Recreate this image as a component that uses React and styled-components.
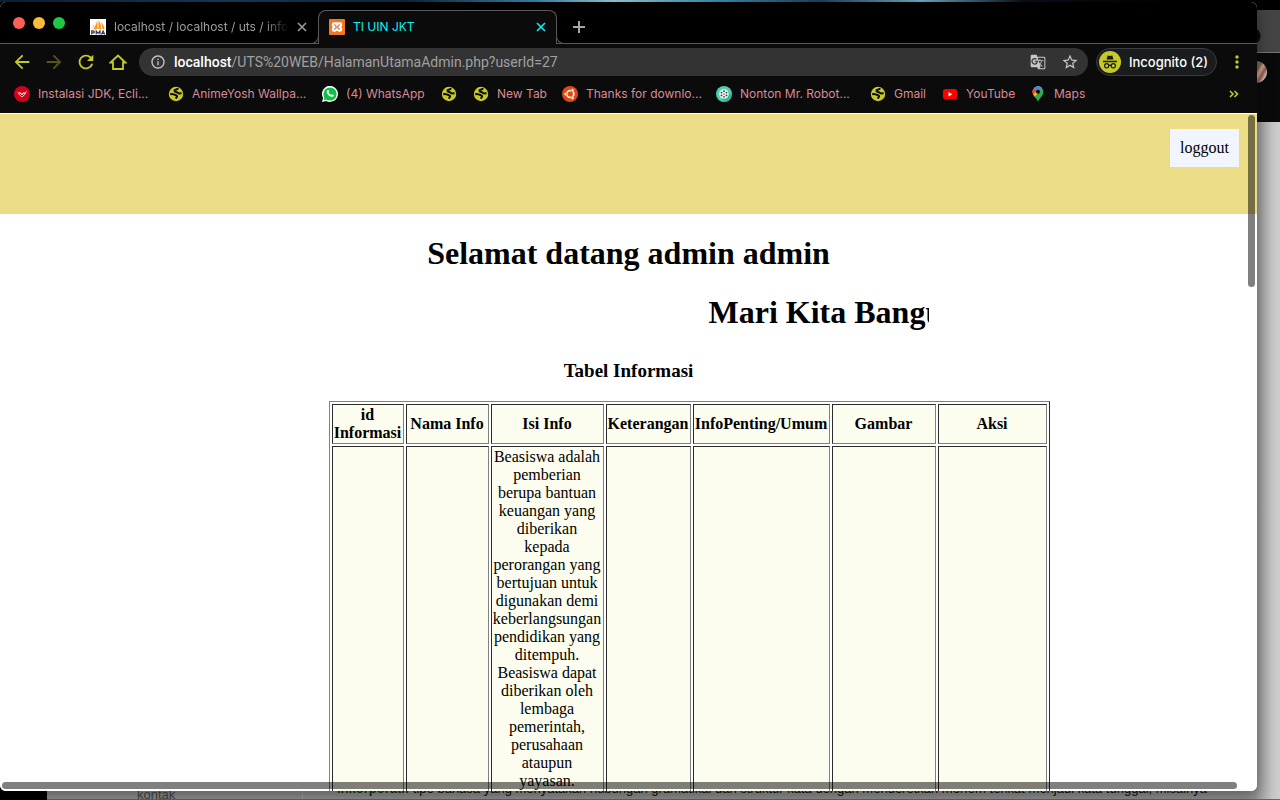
import React from "react";
import styled, { createGlobalStyle } from "styled-components";
import { MdGTranslate, MdStarBorder, MdInfoOutline, MdMoreVert, MdArrowBack, MdArrowForward, MdRefresh } from "react-icons/md";

const lime = "#c6ca29";
const line = "#59595b";
const bar = "#0b0b0b";

const Global = createGlobalStyle`
  *, *::before, *::after { box-sizing: border-box; }
  html, body { margin: 0; height: 100%; overflow: hidden; }
  #root { height: 100%; }
  button { font: inherit; color: inherit; background: none; border: 0; padding: 0; }
  a { color: inherit; text-decoration: none; }
  svg { display: block; flex: none; }
`;

const Desktop = styled.div`
  position: relative;
  height: 100vh;
  padding: 2px 23px 9px 0;
  overflow: hidden;
  background: linear-gradient(90deg, #0d2238 0%, #1b3c5c 18%, #0e2a44 32%, #3c8db0 42%, #9ad3e2 48%, #3a93b4 56%, #1a4560 64%, #6fb3ca 72%, #07101a 80%, #000 92%) top / 100% 2px no-repeat #000;
`;

const BackWindow = styled.div`
  position: absolute;
  inset: 2px 0 0 47px;
  display: flex;
  flex-direction: column;
  background: #000;
`;
const BackTabs = styled.div`
  height: 51px;
  border-top: 8px solid #000;
  border-bottom: 1px solid #777;
  background: radial-gradient(circle at calc(100% - 28px) 26px, #0a0a0a 8px, transparent 9px) #444;
`;
const BackBar = styled.div`
  display: flex;
  justify-content: flex-end;
  height: 69px;
  padding: 8px 13px;
  background: #0a0a0a;
`;
const Avatar = styled.span`
  width: 22px;
  height: 22px;
  border-radius: 50%;
  background: linear-gradient(120deg, #765 50%, #d9a58f 60%, #8c5a50 72%, #cfc8bb 84%, #555 95%);
`;
const BackPage = styled.div`
  flex: 1;
  display: flex;
  align-items: flex-end;
  border-bottom: 1px solid #666;
  background: linear-gradient(90deg, #919191 calc(100% - 32px), #969696 calc(100% - 24px), #c4c4c4 calc(100% - 8px), #cecece);
  font: 13px/14px "Liberation Sans", Arial, sans-serif;
  color: #444;
`;
const BackSide = styled.div`
  width: 256px;
  height: 11px;
  padding-left: 90px;
  border-right: 1px solid #a5a5a5;
  white-space: nowrap;
`;
const BackText = styled.p`
  margin: 0 0 0 34px;
  height: 17px;
  white-space: nowrap;
  color: #0a0a0a;
  b { color: #0a3a12; }
`;

const Window = styled.div`
  position: relative;
  height: 100%;
  display: flex;
  flex-direction: column;
  overflow: hidden;
  border-radius: 6px;
  background: #fff;
  box-shadow: 0 4px 16px rgba(0, 0, 0, 0.4);
  font-family: Inter, "Liberation Sans", sans-serif;
`;

const TabStrip = styled.div`
  display: flex;
  align-items: flex-end;
  flex: none;
  height: 42px;
  padding-left: 13px;
  border-bottom: 1px solid ${line};
  background: #000;
`;
const Lights = styled.div`
  display: flex;
  align-self: flex-start;
  gap: 8px;
  margin: 15px 15px 0 0;
`;
const Light = styled.button`
  width: 12px;
  height: 12px;
  border-radius: 50%;
  background: ${(p) => p.$color};
`;
const Tab = styled.div`
  position: relative;
  display: flex;
  align-items: center;
  width: ${(p) => (p.$active ? 239 : 238)}px;
  height: 34px;
  margin-bottom: -1px;
  padding: 0 10px 2px;
  padding-left: ${(p) => (p.$active ? 10 : 9)}px;
  gap: 8px;
  border: 1px solid transparent;
  border-bottom: 0;
  border-radius: 8px 8px 0 0;
  font-size: 12px;
  color: #9a9d9f;
  ${(p) => p.$active && `
    background: ${bar};
    border-color: ${line};
    color: #00f5f5;
    &::before, &::after {
      content: "";
      position: absolute;
      bottom: 0;
      width: 9px;
      height: 9px;
      background: #000;
      border-bottom: 1px solid ${line};
    }
    &::before { left: -9px; border-right: 1px solid ${line}; border-bottom-right-radius: 8px; }
    &::after { right: -9px; border-left: 1px solid ${line}; border-bottom-left-radius: 8px; }
  `}
`;
const TabTitle = styled.span`
  flex: 1;
  white-space: nowrap;
  ${(p) => p.$fade && "mask-image: linear-gradient(90deg, #000 calc(100% - 24px), transparent);"}
`;
const NewTab = styled.button`
  align-self: flex-end;
  margin: 0 0 10px 16px;
  color: #a5a8aa;
`;

const Toolbar = styled.div`
  display: flex;
  align-items: center;
  flex: none;
  height: 36px;
  padding: 0 12px 0 11px;
  gap: 10px;
  background: ${bar};
  color: ${lime};
`;
const NavButton = styled.button`
  display: grid;
  place-items: center;
  width: 22px;
  height: 22px;
  &:disabled { color: #55571a; }
`;
const Omnibox = styled.div`
  flex: 1;
  display: flex;
  align-items: center;
  gap: 8px;
  height: 28px;
  margin-right: -2px;
  padding: 0 9px 0 11px;
  border-radius: 14px;
  background: #333;
  color: #c8c8c8;
`;
const Address = styled.a`
  flex: 1;
  font-family: Roboto, "Liberation Sans", sans-serif;
  font-size: 14px;
  color: #a0a0a0;
  b { color: #fff; font-weight: 500; }
`;
const OmniButton = styled.button`
  display: grid;
  place-items: center;
  width: 18px;
  height: 18px;
  margin-left: 6px;
`;
const Incognito = styled.button`
  display: flex;
  align-items: center;
  flex: none;
  gap: 8px;
  width: 121px;
  height: 28px;
  padding: 0 2px;
  border: 1px solid #3a3c3f;
  border-radius: 14px;
  background: #1b1c1e;
  font-size: 13px;
  font-weight: 500;
  color: #fff;
  white-space: nowrap;
`;
const MenuButton = styled.button`
  width: 18px;
`;

const Bookmarks = styled.nav`
  display: flex;
  flex: none;
  gap: 16px;
  height: 33px;
  padding: 6px 18px 0 14px;
  background: ${bar};
  font-size: 12px;
  line-height: 16px;
  color: #d98a96;
  white-space: nowrap;
`;
const Bookmark = styled.a`
  display: flex;
  gap: 8px;
  height: 16px;
`;
const BookmarkLabel = styled.span`
  width: ${(p) => p.$width}px;
`;
const More = styled.button`
  height: 16px;
  margin-left: auto;
  color: ${lime};
`;

const Viewport = styled.div`
  position: relative;
  flex: 1;
  min-height: 0;
  overflow: hidden;
  border-top: 1px solid #fff;
  background: #fff;
  font: 16px/18px "Liberation Serif", "Times New Roman", serif;
  color: #000;
`;
const Banner = styled.header`
  display: flex;
  justify-content: flex-end;
  align-items: flex-start;
  height: 100px;
  padding: 15px 18px;
  background: #ebdd85;
`;
const Logout = styled.a`
  padding: 10px;
  background: #f0f5ff;
`;
const Content = styled.main`
  width: 600px;
  margin: 0 auto;
`;
const Welcome = styled.h1`
  margin: 21px 0 22px;
  font-size: 32px;
  line-height: 37px;
  text-align: center;
`;
const Marquee = styled.div`
  overflow: hidden;
  padding-left: 380px;
  font-size: 32px;
  font-weight: bold;
  line-height: 37px;
  white-space: nowrap;
`;
const TableTitle = styled.h3`
  margin: 29px 0 20px;
  font-size: 19px;
  line-height: 21px;
  text-align: center;
`;
const InfoTable = styled.table`
  table-layout: fixed;
  width: 721px;
  border: 1px solid;
  border-color: #808080 #2c2c2c #2c2c2c #808080;
  border-spacing: 2px;
  text-align: center;
  th, td {
    padding: 1px;
    border: 1px solid;
    border-color: #2c2c2c #808080 #808080 #2c2c2c;
    background: #fcfdee;
  }
  td { height: 460px; vertical-align: top; white-space: pre-line; }
`;
const Col = styled.col`
  width: ${(p) => p.$width}px;
`;
const ScrollThumb = styled.div`
  position: absolute;
  border-radius: 4px;
  background: rgba(0, 0, 0, 0.5);
  ${(p) => (p.$vertical
    ? "top: 1px; right: 2px; width: 7px; height: 172px;"
    : "left: 2px; right: 20px; bottom: 2px; height: 7px;")}
`;

const Icon = ({ size = 16, box = 16, children }) => (
  <svg width={size} height={size} viewBox={`0 0 ${box} ${box}`} fill="none" aria-hidden="true">{children}</svg>
);
const Globe = () => (
  <Icon>
    <circle cx="8" cy="8" r="7.2" fill={lime} />
    <path d="M10.500 2.800C9 2.600 8.600 3.500 7.400 3.800 6 4.200 6.200 5.800 7.800 5.900c1.800.1 2 1.300 3.200 1.500l2.600-.2M2.200 8.300c1.400-.3 2.400-.4 3.400.1 1.600.8 3.100.5 3.500 1.700.3 1-.9 1.300-1.300 2.500" stroke="#0b0b0b" strokeWidth="2" />
  </Icon>
);
const Joget = () => (
  <Icon>
    <circle cx="8" cy="8" r="8" fill="#d0021b" />
    <path d="M3.500 6.200 5 7.500l1.500-.8L8 8.200l1.600-1.500 1.200.8 2-2.300M4.300 7.600 8 11l3.800-3.600M5.400 6.400 8 9l2.600-2.600" stroke="#ffdfe2" strokeWidth=".9" />
  </Icon>
);
const Whatsapp = () => (
  <Icon>
    <path d="M0 16 1.100 12A8 8 0 1 1 4.100 14.900Z" fill="#fff" />
    <circle cx="8" cy="8" r="6.600" fill="#0cc143" />
    <path d="M1.700 14.300 2.600 11l2.300 2.400Z" fill="#0cc143" />
    <path d="M5.500 4.200c.5-.4 1-.3 1.200.2l.5 1.200c.1.400-.6.8-.5 1.200.5 1 1.300 1.700 2.300 2.200.5.100.8-.8 1.300-.7l1.300.6c.5.300.2 1.200-.2 1.500C9.500 12 4.200 8.400 4.700 5.400Z" fill="#fff" />
  </Icon>
);
const Ubuntu = () => (
  <Icon>
    <circle cx="8" cy="8" r="8" fill="#dd4814" />
    <circle cx="8.300" cy="8" r="3.500" stroke="#fff" strokeWidth="1.700" />
    <g fill="#fff" stroke="#dd4814" strokeWidth=".6">
      <circle cx="3.500" cy="8" r="1.500" /><circle cx="10.600" cy="3.900" r="1.500" /><circle cx="10.600" cy="12.100" r="1.500" />
    </g>
  </Icon>
);
const Reel = () => (
  <Icon>
    <circle cx="8" cy="8" r="8" fill="#4ccfac" />
    <path d="M11 3.500 15.700 9.500A8 8 0 0 1 9 16L5 12Z" fill="#35b595" />
    <circle cx="8" cy="8" r="4.800" fill="#eef5f3" />
    <g fill="#2d4a50">
      <circle cx="8" cy="8" r=".7" /><circle cx="8" cy="5.200" r=".9" /><circle cx="10.500" cy="6.600" r=".9" /><circle cx="10.500" cy="9.400" r=".9" /><circle cx="8" cy="10.800" r=".9" /><circle cx="5.500" cy="9.400" r=".9" /><circle cx="5.500" cy="6.600" r=".9" />
    </g>
  </Icon>
);
const Youtube = () => (
  <Icon>
    <rect x="1" y="3" width="14" height="10.500" rx="2.500" fill="#f00" />
    <path d="M6.500 6v4.400L10.300 8.200Z" fill="#fff" />
  </Icon>
);
const Maps = () => (
  <Icon>
    <path d="M8 16C7.300 12.500 2.600 10 2.600 5.700A5.400 5.400 0 0 1 13.400 5.700C13.400 10 8.700 12.500 8 16Z" fill="#34a853" />
    <path d="M4.700 10.700 12.200 2.300A5.400 5.400 0 0 0 2.900 4.200C2.200 6.500 3.100 8.800 4.700 10.700Z" fill="#fbbc04" />
    <path d="M3.800 2.300 6.700 4.700 3 8.200A5.400 5.400 0 0 1 3.800 2.300Z" fill="#ea4335" />
    <path d="M3.800 2.300A5.400 5.400 0 0 1 12.200 2.300L9.400 5.400 6.300 4.400Z" fill="#4285f4" />
    <circle cx="8" cy="5.700" r="2" fill="#0b0b0b" />
  </Icon>
);
const PhpMyAdmin = () => (
  <Icon>
    <rect width="16" height="16" fill="#fff" />
    <path d="M7.200 1 7.600 10H3.200C5.200 7.500 6.500 4.500 7.200 1ZM8.500 1.500C10.600 3.500 11.300 7 11.300 10H8.300ZM11 3c2 1.600 3 4.600 3.600 7H12.200C12.200 7.500 11.800 5.700 11 3ZM4.500 4.500 4 7.500 1.200 10C2.800 8.500 3.800 6.500 4.500 4.500Z" fill="#f79a1c" />
    <path d="M1.700 15.500v-3.600h1.600a1 1 0 0 1 0 2H2M6.200 15.500v-3.600l1.900 2.400L10 11.900v3.600M11.500 15.500l1.600-3.600 1.600 3.600M12 14.500h2.200" stroke="#35365f" strokeWidth="1.200" />
  </Icon>
);
const Xampp = () => (
  <Icon>
    <rect width="16" height="16" rx="1" fill="#f37623" />
    <path d="M5 3.200h6a2.200 2.200 0 0 1 2.200 2.200c0 1.200-.5 1.800-.9 2.600.4.800.9 1.400.9 2.600A2.200 2.200 0 0 1 11 12.800c-1.400 0-1.800-.8-3-.8s-1.600.8-3 .8a2.200 2.200 0 0 1-2.200-2.200c0-1.200.5-1.800.9-2.600-.4-.8-.9-1.400-.9-2.600A2.200 2.200 0 0 1 5 3.200Z" fill="#fff" />
    <path d="M5.200 5.400 7 7v2l-1.800 1.600M10.800 5.400 9 7v2l1.800 1.600M7 8h2" stroke="#f37623" strokeWidth="1.200" />
  </Icon>
);
const Cross = () => (
  <Icon size={10} box={10}><path d="M1 1 9 9M9 1 1 9" stroke="currentColor" strokeWidth="1.600" /></Icon>
);
const Home = () => (
  <Icon size={18} box={18}><path d="M1.600 9.500 9 2.600l7.400 6.900H14V16H4V9.500Z" stroke="currentColor" strokeWidth="1.800" /></Icon>
);
const Spy = () => (
  <Icon size={22} box={22}>
    <circle cx="11" cy="11" r="11" fill={lime} />
    <path d="M7.500 8.500 8.700 4.500 11 5l2.300-.5 1.200 4Z" fill="#1b1c1e" />
    <path d="M4 10.500h14" stroke="#1b1c1e" strokeWidth="1.300" />
    <circle cx="7.700" cy="14.700" r="2.100" stroke="#1b1c1e" strokeWidth="1.200" />
    <circle cx="14.300" cy="14.700" r="2.100" stroke="#1b1c1e" strokeWidth="1.200" />
    <path d="M9.800 14.500q1.200-.8 2.400 0" stroke="#1b1c1e" strokeWidth="1.100" />
  </Icon>
);

const bookmarks = [
  { icon: Joget, label: "Instalasi JDK, Ecli...", width: 114 },
  { icon: Globe, label: "AnimeYosh Wallpa...", width: 114 },
  { icon: Whatsapp, label: "(4) WhatsApp", width: 79 },
  { icon: Globe },
  { icon: Globe, label: "New Tab", width: 49 },
  { icon: Ubuntu, label: "Thanks for downlo...", width: 114 },
  { icon: Reel, label: "Nonton Mr. Robot...", width: 114 },
  { icon: Globe, label: "Gmail", width: 32 },
  { icon: Youtube, label: "YouTube", width: 48 },
  { icon: Maps, label: "Maps", width: 32 },
];

const columns = [
  ["id Informasi", 72],
  ["Nama Info", 83],
  ["Isi Info", 113],
  ["Keterangan", 85],
  ["InfoPenting/Umum", 137],
  ["Gambar", 104],
  ["Aksi", 109],
];

const info = `Beasiswa adalah
pemberian
berupa bantuan
keuangan yang
diberikan
kepada
perorangan yang
bertujuan untuk
digunakan demi
keberlangsungan
pendidikan yang
ditempuh.
Beasiswa dapat
diberikan oleh
lembaga
pemerintah,
perusahaan
ataupun
yayasan.`;

export default function App() {
  return (
    <Desktop>
      <Global />
      <BackWindow>
        <BackTabs />
        <BackBar><Avatar /></BackBar>
        <BackPage>
          <BackSide>kontak</BackSide>
          <BackText>
            <b>Inkorporatif</b> tipe bahasa yang menyatakan hubungan gramatikal dan struktur kata dengan menderetkan morfem terikat menjadi kata tunggal, misalnya
          </BackText>
        </BackPage>
      </BackWindow>
      <Window>
        <TabStrip>
          <Lights>
            <Light $color="#ff5f57" aria-label="Close window" />
            <Light $color="#febc38" aria-label="Minimize window" />
            <Light $color="#1fc843" aria-label="Zoom window" />
          </Lights>
          <Tab>
            <PhpMyAdmin />
            <TabTitle $fade>localhost / localhost / uts / info</TabTitle>
            <button aria-label="Close tab"><Cross /></button>
          </Tab>
          <Tab $active>
            <Xampp />
            <TabTitle>TI UIN JKT</TabTitle>
            <button aria-label="Close tab"><Cross /></button>
          </Tab>
          <NewTab aria-label="New tab">
            <Icon size={12} box={12}><path d="M6 0v12M0 6h12" stroke="currentColor" strokeWidth="2" /></Icon>
          </NewTab>
        </TabStrip>
        <Toolbar>
          <NavButton aria-label="Back"><MdArrowBack size={22} /></NavButton>
          <NavButton aria-label="Forward" disabled><MdArrowForward size={22} /></NavButton>
          <NavButton aria-label="Reload"><MdRefresh size={22} /></NavButton>
          <NavButton aria-label="Home"><Home /></NavButton>
          <Omnibox>
            <MdInfoOutline size={16} />
            <Address href="#"><b>localhost</b>/UTS%20WEB/HalamanUtamaAdmin.php?userId=27</Address>
            <OmniButton aria-label="Translate"><MdGTranslate size={16} /></OmniButton>
            <OmniButton aria-label="Bookmark this tab"><MdStarBorder size={18} /></OmniButton>
          </Omnibox>
          <Incognito><Spy />Incognito (2)</Incognito>
          <MenuButton aria-label="Menu"><MdMoreVert size={20} /></MenuButton>
        </Toolbar>
        <Bookmarks>
          {bookmarks.map(({ icon: Mark, label, width }, i) => (
            <Bookmark key={i} href="#" aria-label={label || "Bookmark"}>
              <Mark />
              {label && <BookmarkLabel $width={width}>{label}</BookmarkLabel>}
            </Bookmark>
          ))}
          <More aria-label="More bookmarks">
            <Icon size={10} box={10}><path d="M1 2 4 5 1 8M5.500 2l3 3-3 3" stroke="currentColor" strokeWidth="1.600" /></Icon>
          </More>
        </Bookmarks>
        <Viewport>
          <Banner><Logout href="#">loggout</Logout></Banner>
          <Content>
            <Welcome>Selamat datang admin admin</Welcome>
            <Marquee>Mari Kita Bangu</Marquee>
            <TableTitle>Tabel Informasi</TableTitle>
            <InfoTable>
              <colgroup>{columns.map(([name, width]) => <Col key={name} $width={width} />)}</colgroup>
              <thead><tr>{columns.map(([name]) => <th key={name}>{name}</th>)}</tr></thead>
              <tbody><tr>{columns.map(([name]) => <td key={name}>{name === "Isi Info" ? info : ""}</td>)}</tr></tbody>
            </InfoTable>
          </Content>
          <ScrollThumb $vertical />
          <ScrollThumb />
        </Viewport>
      </Window>
    </Desktop>
  );
}
